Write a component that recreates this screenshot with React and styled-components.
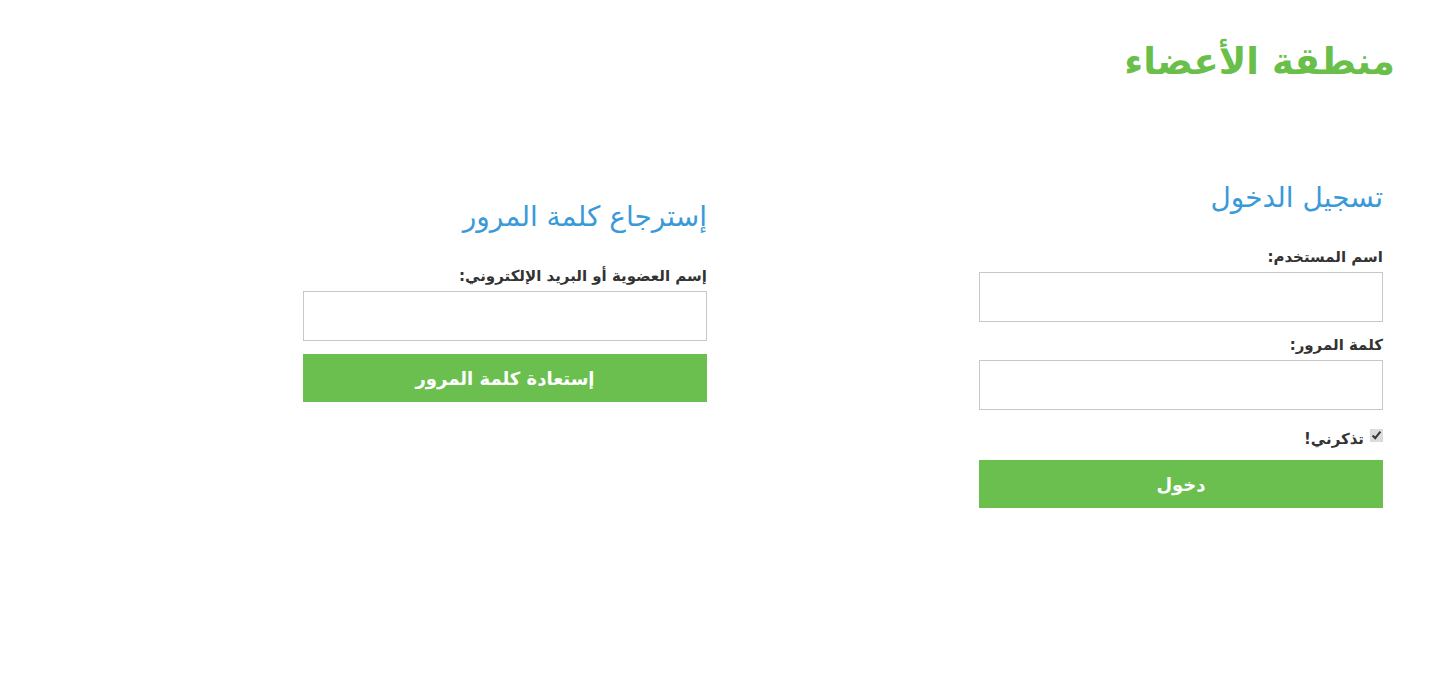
import styled, { createGlobalStyle } from "styled-components";

const Global = createGlobalStyle`
  body {
    margin: 0;
    background: #fff;
    font-family: "DejaVu Sans", sans-serif;
    color: #333;
  }
`;

const Page = styled.div`
  direction: rtl;
  padding: 36px 0 40px;
`;

const Title = styled.h1`
  margin: 0;
  padding-right: 43px;
  font-size: 37px;
  font-weight: bold;
  color: #6abf4b;
  line-height: 52px;
`;

const Columns = styled.div`
  display: grid;
  grid-template-columns: 1fr 1fr;
  margin: 92px 55px 0 31px;
`;

const Column = styled.section`
  display: flex;
  flex-direction: column;
  align-items: flex-start;
  padding-top: ${(p) => p.$offset || 0}px;
`;

const Form = styled.form`
  width: 404px;
  display: flex;
  flex-direction: column;
`;

const Heading = styled.h2`
  margin: 0 0 32px;
  font-size: 28px;
  font-weight: normal;
  color: #3a9ad9;
  line-height: 36px;
`;

const Label = styled.label`
  font-size: 15px;
  font-weight: bold;
  color: #333;
  margin-bottom: 6px;
  line-height: 18px;
`;

const Input = styled.input`
  box-sizing: border-box;
  width: 100%;
  height: 50px;
  border: 1px solid #c8c8c8;
  margin: 0 0 ${(p) => p.$gap || 14}px;
  padding: 0 10px;
  font-size: 14px;
  font-family: inherit;
  direction: rtl;
`;

const Remember = styled.label`
  display: flex;
  align-items: center;
  gap: 4px;
  font-size: 15px;
  font-weight: bold;
  margin: 1px 0 11px;
  line-height: 20px;

  input {
    margin: 0 0 0 2px;
    width: 13px;
    height: 13px;
    position: relative;
    top: -4px;
    accent-color: #dcdcdc;
  }
`;

const Button = styled.button`
  width: 100%;
  height: 48px;
  border: none;
  background: #6abf4f;
  color: #fff;
  font-family: inherit;
  font-size: 18px;
  font-weight: bold;
  cursor: pointer;
`;

export default function App() {
  return (
    <Page>
      <Global />
      <Title>منطقة الأعضاء</Title>
      <Columns>
        <Column>
          <Form onSubmit={(e) => e.preventDefault()}>
            <Heading>تسجيل الدخول</Heading>
            <Label>اسم المستخدم:</Label>
            <Input type="text" />
            <Label>كلمة المرور:</Label>
            <Input type="password" $gap={18} />
            <Remember>
              <input type="checkbox" defaultChecked />
              تذكرني!
            </Remember>
            <Button type="submit">دخول</Button>
          </Form>
        </Column>
        <Column $offset={19}>
          <Form onSubmit={(e) => e.preventDefault()}>
            <Heading>إسترجاع كلمة المرور</Heading>
            <Label>إسم العضوية أو البريد الإلكتروني:</Label>
            <Input type="text" $gap={13} />
            <Button type="submit">إستعادة كلمة المرور</Button>
          </Form>
        </Column>
      </Columns>
    </Page>
  );
}
